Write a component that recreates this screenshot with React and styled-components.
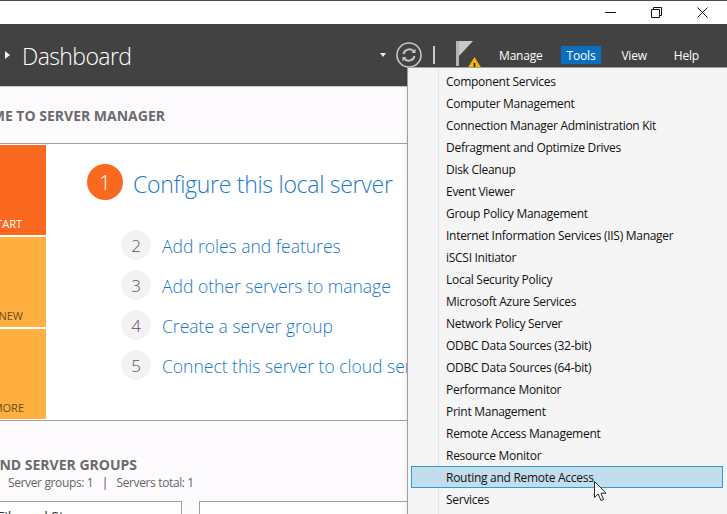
import React from "react";
import styled, { createGlobalStyle } from "styled-components";

const GlobalStyle = createGlobalStyle`
    html, body {
        margin:0;
        padding:0;
        width:727px;
        height:514px;
        overflow:hidden;
        background:#fdfbfe;
        font-family:"Open Sans", "Noto Sans", sans-serif;
    }
    * { box-sizing:border-box; }
`

const Page = styled.div`
    position:relative;
    display:flex;
    flex-direction:column;
    width:727px;
    height:514px;
    overflow:hidden;
    background:#fdfbfe;
`

const TitleBar = styled.div`
    display:flex;
    align-items:center;
    justify-content:flex-end;
    flex:none;
    height:24px;
    padding:0 2px 1px 0;
    background:#fff;
    border-top:1px solid #4a4a4a;
`

const WindowButton = styled.div`
    display:flex;
    align-items:center;
    justify-content:center;
    width:46px;
    height:22px;
`

const Header = styled.header`
    display:flex;
    align-items:center;
    flex:none;
    height:63px;
    background:#424242;
    border-bottom:1px solid #c8c8c8;
`

const Crumb = styled.div`
    display:flex;
    align-items:center;
    gap:12px;
    padding-left:5px;
    flex:1;
`

const Arrow = styled.span`
    width:0;
    height:0;
    border-left:5px solid #f0f0f0;
    border-top:4px solid transparent;
    border-bottom:4px solid transparent;
`

const PageTitle = styled.span`
    padding-top:2px;
    font-size:23px;
    font-weight:300;
    color:#fff;
    letter-spacing:-0.6px;
`

const Tools = styled.div`
    display:flex;
    align-items:center;
    padding-right:22px;
`

const DropCaret = styled.span`
    width:0;
    height:0;
    margin-right:10px;
    border-top:4px solid #f0f0f0;
    border-left:3.5px solid transparent;
    border-right:3.5px solid transparent;
`

const Separator = styled.span`
    width:2px;
    height:18px;
    margin:0 20px 0 11px;
    background:#c8c8c8;
`

const MenuItem = styled.span`
    display:flex;
    align-items:center;
    height:18px;
    margin-left:${(props) => props.$gap}px;
    padding:1px 6px 0;
    font-size:12px;
    letter-spacing:-0.2px;
    color:#fff;
    background:${(props) => (props.$active ? "#0a6fbe" : "transparent")};
`

const FlagWrap = styled.span`
    display:flex;
`

const Content = styled.main`
    display:flex;
    flex-direction:column;
    flex:1;
    min-height:0;
`

const SectionHead = styled.h2`
    display:flex;
    justify-content:flex-end;
    width:${(props) => props.$width}px;
    margin:0;
    overflow:hidden;
    white-space:nowrap;
    font-size:14px;
    font-weight:700;
    color:#6b6b6b;
`

const WelcomeBand = styled.div`
    display:flex;
    align-items:center;
    flex:none;
    height:57px;
    border-bottom:1px solid #a0a0a0;
`

const Welcome = styled.div`
    display:flex;
    flex:none;
    height:277px;
    background:#fff;
    border-bottom:1px solid #a0a0a0;
`

const TileColumn = styled.div`
    display:flex;
    flex-direction:column;
    gap:2px;
    flex:none;
    width:46px;
    padding:1px 0 0;
`

const Tile = styled.div`
    display:flex;
    align-items:flex-end;
    justify-content:flex-end;
    flex:none;
    height:90px;
    padding:0 ${(props) => props.$end}px 4px 0;
    overflow:hidden;
    white-space:nowrap;
    font-size:11px;
    color:${(props) => props.$color};
    background:${(props) => props.$bg};
`

const Steps = styled.div`
    display:flex;
    flex-direction:column;
    padding:20px 0 0 41px;
    min-width:0;
`

const MainStep = styled.div`
    display:flex;
    align-items:center;
    gap:10px;
    margin-bottom:30px;
`

const MainNumber = styled.span`
    display:flex;
    align-items:center;
    justify-content:center;
    width:36px;
    height:36px;
    border-radius:50%;
    font-size:20px;
    font-weight:300;
    color:#fff;
    background:#fb6820;
`

const MainLink = styled.span`
    padding-top:3px;
    font-size:23px;
    font-weight:300;
    color:#1979ca;
    letter-spacing:-0.28px;
`

const SubStep = styled.div`
    display:flex;
    align-items:center;
    gap:11px;
    height:30px;
    margin:0 0 10px 34px;
    white-space:nowrap;
`

const SubNumber = styled.span`
    display:flex;
    flex:none;
    align-items:center;
    justify-content:center;
    width:30px;
    height:30px;
    border-radius:50%;
    font-size:17px;
    font-weight:300;
    color:#555;
    background:#f5f2f6;
`

const SubLink = styled.span`
    padding-top:2px;
    font-size:17.5px;
    font-weight:300;
    color:#1979ca;
`

const GroupsBand = styled.div`
    display:flex;
    flex-direction:column;
    padding-top:34px;
`

const Counts = styled.div`
    display:flex;
    padding-left:8px;
    white-space:nowrap;
    font-size:12px;
    letter-spacing:-0.37px;
    color:#666;
`

const Divider = styled.span`
    margin:0 8.5px;
    color:#444;
`

const Cards = styled.div`
    display:flex;
    gap:17px;
    margin-top:10px;
`

const Card = styled.div`
    flex:none;
    width:${(props) => props.$width}px;
    height:40px;
    padding-top:8px;
    background:#fff;
    border:1px solid #a0a0a0;
    border-left:${(props) => (props.$cut ? "none" : "1px solid #a0a0a0")};
    overflow:hidden;
`

const CardTitle = styled.div`
    width:130px;
    margin-left:-3px;
    line-height:14px;
    font-size:14px;
    color:#333;
`

const ToolsMenu = styled.nav`
    position:absolute;
    top:67px;
    left:407px;
    width:330px;
    height:460px;
    padding:2px 3px;
    background:#f5f5f5;
    border:1px solid #a0a0a0;
    box-shadow:-1px 1px 2px rgba(0, 0, 0, 0.08);
    &::before {
        content:"";
        position:absolute;
        top:0;
        bottom:0;
        left:30px;
        width:1px;
        background:#e3e3e3;
    }
`

const Item = styled.div`
    position:relative;
    display:flex;
    align-items:center;
    height:22px;
    width:312px;
    padding-left:35px;
    white-space:nowrap;
    font-size:12px;
    letter-spacing:-0.28px;
    color:#111;
    background:${(props) => (props.$hover ? "#c2deec" : "transparent")};
    box-shadow:${(props) => (props.$hover ? "inset 0 0 0 1px #2a9ed8" : "none")};
`

const Pointer = styled.svg`
    position:absolute;
    left:593px;
    top:480px;
`

const menuItems = [
    "Component Services",
    "Computer Management",
    "Connection Manager Administration Kit",
    "Defragment and Optimize Drives",
    "Disk Cleanup",
    "Event Viewer",
    "Group Policy Management",
    "Internet Information Services (IIS) Manager",
    "iSCSI Initiator",
    "Local Security Policy",
    "Microsoft Azure Services",
    "Network Policy Server",
    "ODBC Data Sources (32-bit)",
    "ODBC Data Sources (64-bit)",
    "Performance Monitor",
    "Print Management",
    "Remote Access Management",
    "Resource Monitor",
    "Routing and Remote Access",
    "Services",
];

const subSteps = [
    ["2", "Add roles and features"],
    ["3", "Add other servers to manage"],
    ["4", "Create a server group"],
    ["5", "Connect this server to cloud services"],
];

function RefreshIcon() {
    return (
        <svg width="26" height="26" viewBox="0 0 26 26" fill="none">
            <circle cx="13" cy="13" r="12" stroke="#c8c8c8" strokeWidth="1.6" />
            <path d="M7.5 12 A6 6 0 0 1 17.5 9" stroke="#c8c8c8" strokeWidth="2" />
            <path d="M18.5 14 A6 6 0 0 1 8.5 17" stroke="#c8c8c8" strokeWidth="2" />
            <path d="M15.5 11 L19.5 11 L19.5 6.5 Z" fill="#c8c8c8" />
            <path d="M10.5 15 L6.5 15 L6.5 19.5 Z" fill="#c8c8c8" />
        </svg>
    );
}

function FlagIcon() {
    return (
        <svg width="28" height="28" viewBox="0 0 28 28">
            <rect x="1" y="0" width="3" height="25" fill="#b4b4b4" />
            <path d="M4 0 L18 0 L4 15 Z" fill="#c8c8c8" />
            <path d="M19.5 16 L27 28 L12 28 Z" fill="#f7b500" />
            <rect x="18.7" y="22" width="1.6" height="5" fill="#222" />
        </svg>
    );
}

function App() {
    return (
        <Page>
            <GlobalStyle />
            <TitleBar>
                <WindowButton>
                    <svg width="11" height="11" viewBox="0 0 11 11">
                        <path d="M0 5.5H11" stroke="#111" />
                    </svg>
                </WindowButton>
                <WindowButton>
                    <svg width="11" height="11" viewBox="0 0 11 11" fill="none">
                        <path d="M0.5 2.5H8.5V10.5H0.5Z M2.5 2.5V0.5H10.5V8.5H8.5" stroke="#111" />
                    </svg>
                </WindowButton>
                <WindowButton>
                    <svg width="11" height="11" viewBox="0 0 11 11">
                        <path d="M0.5 0.5L10.5 10.5M10.5 0.5L0.5 10.5" stroke="#111" />
                    </svg>
                </WindowButton>
            </TitleBar>

            <Header>
                <Crumb>
                    <Arrow />
                    <PageTitle>Dashboard</PageTitle>
                </Crumb>
                <Tools>
                    <DropCaret />
                    <RefreshIcon />
                    <Separator />
                    <FlagWrap><FlagIcon /></FlagWrap>
                    <MenuItem $gap={10}>Manage</MenuItem>
                    <MenuItem $gap={12} $active>Tools</MenuItem>
                    <MenuItem $gap={14}>View</MenuItem>
                    <MenuItem $gap={15}>Help</MenuItem>
                </Tools>
            </Header>

            <Content>
                <WelcomeBand>
                    <SectionHead $width={165}>WELCOME TO SERVER MANAGER</SectionHead>
                </WelcomeBand>
                <Welcome>
                    <TileColumn>
                        <Tile $bg="#fb6820" $color="#fff" $end={24}>QUICK START</Tile>
                        <Tile $bg="#ffb040" $color="#6a4a20" $end={23}>WHAT'S NEW</Tile>
                        <Tile $bg="#ffb040" $color="#6a4a20" $end={22}>LEARN MORE</Tile>
                    </TileColumn>
                    <Steps>
                        <MainStep>
                            <MainNumber>1</MainNumber>
                            <MainLink>Configure this local server</MainLink>
                        </MainStep>
                        {subSteps.map(([number, text]) => (
                            <SubStep key={number}>
                                <SubNumber>{number}</SubNumber>
                                <SubLink>{text}</SubLink>
                            </SubStep>
                        ))}
                    </Steps>
                </Welcome>
                <GroupsBand>
                    <SectionHead $width={137}>ROLES AND SERVER GROUPS</SectionHead>
                    <Counts>
                        Server groups: 1<Divider>|</Divider>Servers total: 1
                    </Counts>
                    <Cards>
                        <Card $width={182} $cut><CardTitle>File and Storage Services</CardTitle></Card>
                        <Card $width={260}></Card>
                    </Cards>
                </GroupsBand>
            </Content>

            <ToolsMenu>
                {menuItems.map((name) => (
                    <Item key={name} $hover={name === "Routing and Remote Access"}>{name}</Item>
                ))}
            </ToolsMenu>

            <Pointer width="16" height="23" viewBox="0 0 16 23">
                <path d="M1.5 1.5 L1.5 17.5 L5.2 14 L8 20.5 L10.5 19.5 L8 13.2 L13 13.2 Z" fill="#fff" stroke="#222" strokeWidth="1" />
            </Pointer>
        </Page>
    );
}

export default App;
